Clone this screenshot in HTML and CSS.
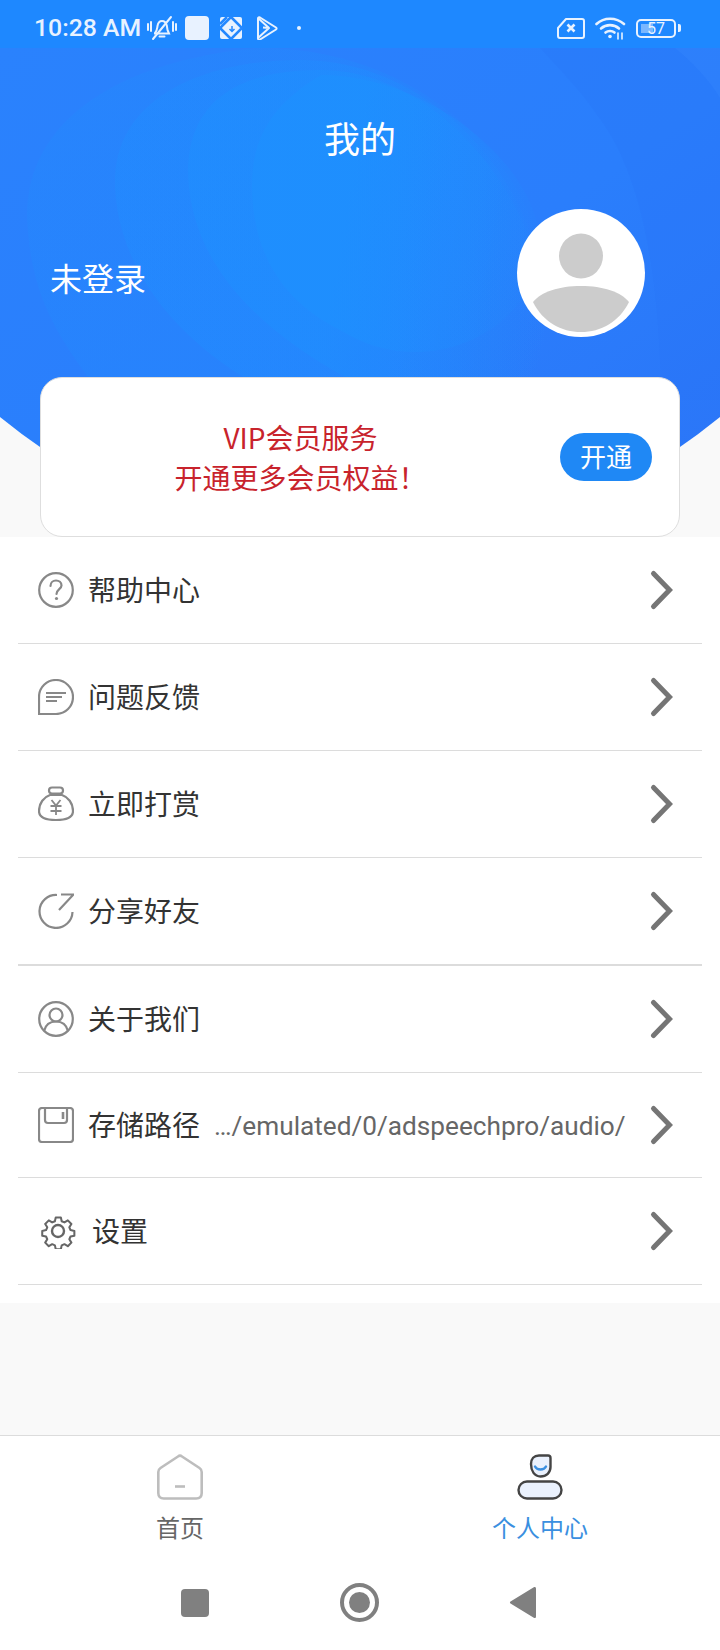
FILE: index.html
```html
<!DOCTYPE html>
<html lang="zh">
<head>
<meta charset="utf-8">
<title>我的</title>
<link rel="stylesheet" href="styles.css">
</head>
<body>
<div class="screen">
  <div class="status">
    <div class="status-left">
      <span class="time">10:28 AM</span>
      <svg class="st-bell" width="30" height="26" viewBox="0 0 30 26" fill="none" stroke="#e8f2ff" stroke-width="2" stroke-linecap="round"><path d="M8 18c2-2 2-4 2.500-7 .5-3 2.500-5 4.500-5s4 1.500 4.800 4.500l.7 4.500 1.500 3.500H8z"/><path d="M12.500 21.500h5"/><path d="M6 24 24 2"/><path d="M1 9v6M4 7v9M26 7v9M29 9v6"/></svg>
      <span class="st-square"></span>
      <svg class="st-icon" width="24" height="24" viewBox="0 0 24 24"><rect x="1" y="1" width="22" height="22" rx="2" fill="#e8f2ff"/><path d="M1 8 8 1M1 12l11 11M12 1l11 11-11 11" fill="none" stroke="#2488ff" stroke-width="2.500"/><path d="M1 12 12 1" fill="none" stroke="#2488ff" stroke-width="2.500"/><path d="M13 10v5M10.500 13l2.500 2.500 2.500-2.500" fill="none" stroke="#2488ff" stroke-width="1.500"/></svg>
      <svg class="st-play" width="22" height="24" viewBox="0 0 22 24" fill="none" stroke="#e8f2ff" stroke-width="2" stroke-linejoin="round"><path d="M2 2.500c0-1 1-1.500 2-1l16 10c.8.500.8 1.500 0 2l-16 10c-1 .5-2 0-2-1z"/><path d="M2 2 13 12 2 22M13 12l-6-.5"/></svg>
      <span class="st-dot"></span>
    </div>
    <div class="status-right">
      <svg width="28" height="22" viewBox="0 0 28 22" fill="none" stroke="#e8f2ff" stroke-width="2"><path d="M9 2h16c1 0 2 1 2 2v15c0 1-1 2-2 2H3c-1 0-2-1-2-2v-8z" stroke-linejoin="round"/><path d="M10.500 7.500l7 7M17.500 7.500l-7 7" stroke-width="2.600"/></svg>
      <svg width="31" height="24" viewBox="0 0 31 24" fill="none" stroke="#e8f2ff" stroke-width="2.600" stroke-linecap="round"><path d="M1.500 8C9 1 21 1 29 8"/><path d="M6 12.500c5-4.500 13-4.500 18 0"/><path d="M10.500 16.500c2.500-2 6.500-2 9 0"/><circle cx="15" cy="20.500" r="1.800" fill="#e8f2ff" stroke="none"/><path d="M23 17v6M27 17v6" stroke-width="1.600"/></svg>
      <span class="battery"><span class="battery-fill"></span><span class="battery-num">57</span></span>
      <span class="battery-nub"></span>
    </div>
  </div>

  <div class="hero">
    <svg class="hero-art" width="720" height="489" viewBox="0 48 720 489">
      <defs>
        <linearGradient id="heroBase" x1="0" y1="0" x2="1" y2="1">
          <stop offset="0" stop-color="#2a82fd"/>
          <stop offset=".55" stop-color="#2a7efc"/>
          <stop offset="1" stop-color="#2b74f7"/>
        </linearGradient>
        <linearGradient id="swirl" gradientUnits="userSpaceOnUse" x1="120" y1="200" x2="560" y2="280">
          <stop offset="0" stop-color="#1c92ff" stop-opacity=".5"/>
          <stop offset=".5" stop-color="#1c92ff" stop-opacity=".5"/>
          <stop offset="1" stop-color="#1c92ff" stop-opacity="0"/>
        </linearGradient>
      </defs>
      <rect x="0" y="48" width="720" height="489" fill="url(#heroBase)"/>
      <path d="M27 215C30 300 60 340 105 400L500 400C620 300 500 48 260 48C120 60 27 120 27 215z" fill="url(#swirl)" opacity=".4"/>
      <path d="M115 181C115 260 170 345 285 400L520 400C600 280 480 60 300 60C200 60 115 100 115 181z" fill="url(#swirl)" opacity=".6"/>
      <path d="M188 168C188 250 240 330 390 400L520 400C600 300 480 70 320 70C240 70 190 100 188 168z" fill="url(#swirl)" opacity=".8"/>
      <path d="M252 185C252 250 280 300 340 330C420 380 520 340 540 260C550 170 430 75 321 75C280 100 252 130 252 185z" fill="url(#swirl)"/>
      <path d="M597 115C640 170 660 270 661 400H720V48H540C560 70 580 90 597 115z" fill="#2b70f5" opacity=".22"/>
      <path d="M675 48C690 60 710 80 720 98V48z" fill="#3a8aff" opacity=".25"/>
    </svg>
    <h1 class="title">我的</h1>
    <div class="profile">
      <span class="login">未登录</span>
      <div class="avatar">
        <svg width="128" height="128" viewBox="0 0 128 128"><ellipse cx="64" cy="47" rx="22" ry="22.500" fill="#ccc"/><path d="M16 93C24 83 42 77 64 77s40 6 48 16C102 113 84 123 64 123S26 113 16 93z" fill="#ccc"/></svg>
      </div>
    </div>
  </div>

  <div class="vip">
    <p class="vip-text">VIP会员服务<br>开通更多会员权益！</p>
    <span class="vip-btn">开通</span>
  </div>

  <div class="list">
    <div class="row">
      <svg class="ico" width="36" height="36" viewBox="0 0 36 36" fill="none" stroke="#888" stroke-width="2.200"><circle cx="18" cy="18" r="16.800"/><path d="M12.500 14c0-3.500 2.500-5.500 5.500-5.500s5.500 2 5.500 5c0 3.500-5 4-5 8.500" stroke-linecap="round"/><circle cx="18.500" cy="26.500" r="1.600" fill="#888" stroke="none"/></svg>
      <span class="label">帮助中心</span>
      <svg class="chev" width="24" height="42" viewBox="0 0 24 42" fill="none" stroke="#757575" stroke-width="5" stroke-linecap="round"><path d="M4.500 4.500 20.500 21 4.500 37.500"/></svg>
    </div>
    <div class="row">
      <svg class="ico" width="36" height="36" viewBox="0 0 36 36" fill="none" stroke="#888" stroke-width="2.200"><path d="M1 35V18C1 8 9 1 18 1s17 7.500 17 17-7.500 17-17 17z"/><path d="M8 14h20M8 18h16M8 22h11"/></svg>
      <span class="label">问题反馈</span>
      <svg class="chev" width="24" height="42" viewBox="0 0 24 42" fill="none" stroke="#757575" stroke-width="5" stroke-linecap="round"><path d="M4.500 4.500 20.500 21 4.500 37.500"/></svg>
    </div>
    <div class="row">
      <svg class="ico" width="36" height="36" viewBox="0 0 36 36" fill="none" stroke="#888" stroke-width="2.200"><path d="M12 9C6 11 1 17 1 25c0 6 5 9 17 9s17-3 17-9c0-8-5-14-11-16z"/><rect x="11" y="1.500" width="14" height="6" rx="3"/><path d="M13.500 14l4.500 5.500 4.500-5.500M18 19.500V29M12.500 20h11M12.500 25h11" stroke-width="1.800"/></svg>
      <span class="label">立即打赏</span>
      <svg class="chev" width="24" height="42" viewBox="0 0 24 42" fill="none" stroke="#757575" stroke-width="5" stroke-linecap="round"><path d="M4.500 4.500 20.500 21 4.500 37.500"/></svg>
    </div>
    <div class="row row-wide">
      <svg class="ico" width="36" height="36" viewBox="0 0 36 36" fill="none" stroke="#888" stroke-width="2.200"><path d="M19 2A16.500 16.500 0 1 0 34.500 19"/><path d="M23 1.500h12.500L21 17" stroke-linejoin="round"/></svg>
      <span class="label">分享好友</span>
      <svg class="chev" width="24" height="42" viewBox="0 0 24 42" fill="none" stroke="#757575" stroke-width="5" stroke-linecap="round"><path d="M4.500 4.500 20.500 21 4.500 37.500"/></svg>
    </div>
    <div class="row">
      <svg class="ico" width="36" height="36" viewBox="0 0 36 36" fill="none" stroke="#888" stroke-width="2.200"><circle cx="18" cy="18" r="16.800"/><circle cx="18" cy="14" r="6.500"/><path d="M6 30c1.500-6 6-9.500 12-9.500S28.500 24 30 30"/></svg>
      <span class="label">关于我们</span>
      <svg class="chev" width="24" height="42" viewBox="0 0 24 42" fill="none" stroke="#757575" stroke-width="5" stroke-linecap="round"><path d="M4.500 4.500 20.500 21 4.500 37.500"/></svg>
    </div>
    <div class="row row-short">
      <svg class="ico" width="36" height="36" viewBox="0 0 36 36" fill="none" stroke="#888" stroke-width="2.200"><rect x="1" y="1" width="34" height="34" rx="3"/><path d="M7 1v12c0 2 1 3 3 3h16c2 0 3-1 3-3V1"/><path d="M25 5v7" stroke-width="2.600"/></svg>
      <span class="label">存储路径</span>
      <span class="path">…/emulated/0/adspeechpro/audio/</span>
      <svg class="chev" width="24" height="42" viewBox="0 0 24 42" fill="none" stroke="#757575" stroke-width="5" stroke-linecap="round"><path d="M4.500 4.500 20.500 21 4.500 37.500"/></svg>
    </div>
    <div class="row">
      <svg class="ico ico-gear" width="36" height="36" viewBox="0 0 36 36" fill="none" stroke="#666" stroke-width="2.400" stroke-linejoin="round"><path d="M15 2h6l1 4.500 3.200 1.400 4-2.400 4.200 4.200-2.400 4 1.400 3.200 4.500 1v5.600l-4.500 1-1.400 3.200 2.400 4-4.200 4.200-4-2.400-3.200 1.400-1 4.500h-6l-1-4.500-3.200-1.400-4 2.400-4.200-4.200 2.400-4-1.400-3.200-4.500-1v-5.600l4.500-1 1.400-3.200-2.400-4 4.200-4.200 4 2.400L14 6.500z" transform="translate(3 2.700) scale(.85)"/><circle cx="18" cy="18" r="6"/></svg>
      <span class="label label-settings">设置</span>
      <svg class="chev" width="24" height="42" viewBox="0 0 24 42" fill="none" stroke="#757575" stroke-width="5" stroke-linecap="round"><path d="M4.500 4.500 20.500 21 4.500 37.500"/></svg>
    </div>
  </div>

  <div class="spacer"></div>

  <div class="tabs">
    <div class="tab">
      <svg width="46" height="46" viewBox="0 0 46 46" fill="none" stroke="#bdbdbd" stroke-width="2.600" stroke-linejoin="round"><path d="M21 2.500c1.200-1 2.800-1 4 0L42.500 14c1.500 1 2.200 2.200 2.200 4v21c0 3.500-2 5.500-5.500 5.500H6.800c-3.500 0-5.500-2-5.500-5.500V18c0-1.800.7-3 2.200-4z"/><path d="M18 32.500h10"/></svg>
      <span class="tab-label">首页</span>
    </div>
    <div class="tab tab-on">
      <svg width="46" height="46" viewBox="0 0 46 46" fill="none"><path d="M14 10c0-5 3-8.500 8-8.500h9c1.500 0 2.500 1 2.500 2.500v9c0 5.500-4 9.500-10 9.500S14 17 14 10z" fill="#eaf1fd" stroke="#444" stroke-width="2.400"/><path d="M18 12.500c2 4 9 4 11 0" stroke="#3a8fe0" stroke-width="2.400" stroke-linecap="round"/><rect x="1.500" y="27.500" width="43" height="17" rx="8.500" fill="#eaf1fd" stroke="#444" stroke-width="2.400"/></svg>
      <span class="tab-label">个人中心</span>
    </div>
  </div>

  <div class="nav">
    <span class="nav-square"></span>
    <span class="nav-circle"><span class="nav-dot"></span></span>
    <svg width="28" height="33" viewBox="0 0 28 33"><path d="M27 2.500v28c0 1.500-1.200 2-2.200 1.300L1.500 17.500c-.8-.5-.8-1.500 0-2L24.800 1.200C25.800.5 27 1 27 2.500z" fill="#808080"/></svg>
  </div>
</div>
</body>
</html>
```
FILE: styles.css
```css
* { box-sizing: border-box; }
html, body { margin: 0; padding: 0; }
body {
  font-family: "Noto Sans CJK SC", "Noto Sans", sans-serif;
  background: #f9f9f9;
  color: #333;
}
.screen {
  width: 720px;
  height: 1650px;
  display: flex;
  flex-direction: column;
  overflow: hidden;
}

/* status bar */
.status {
  height: 48px;
  flex: none;
  background: #1e88ff;
  padding: 8px 39px 0 34px;
  display: flex;
  align-items: center;
  justify-content: space-between;
  color: #e8f2ff;
}
.status-left, .status-right { display: flex; align-items: center; }
.time {
  font-family: Roboto, sans-serif;
  font-size: 24.800px;
  font-weight: 500;
  line-height: 30px;
  margin-right: 6px;
}
.st-bell { margin-right: 8px; }
.st-square { width: 24px; height: 24px; border-radius: 4px; background: #e8f2ff; margin-right: 10px; }
.st-icon { margin-right: 13px; }
.st-play { margin-right: 19px; }
.st-dot { width: 4px; height: 4px; border-radius: 50%; background: #e8f2ff; }
.status-right { gap: 10px; }
.battery {
  width: 40px;
  height: 19px;
  border: 2px solid #e8f2ff;
  border-radius: 5px;
  position: relative;
  display: flex;
  align-items: center;
  justify-content: center;
  overflow: hidden;
}
.battery-fill { position: absolute; left: 3px; top: 3px; bottom: 3px; width: 12px; background: #e8f2ff; opacity: .45; }
.battery-num { position: relative; font-family: Roboto, sans-serif; font-size: 16px; line-height: 15px; color: #e8f2ff; }
.battery-nub { width: 3px; height: 8px; background: #e8f2ff; border-radius: 0 2px 2px 0; margin-left: -8px; }

/* hero */
.hero {
  height: 489px;
  flex: none;
  position: relative;
  clip-path: circle(567px at 360px -69px);
  color: #fff;
}
.hero-art { position: absolute; left: 0; top: 0; display: block; }
.title {
  position: relative;
  margin: 0;
  padding-top: 63px;
  font-size: 36px;
  line-height: 52px;
  font-weight: 400;
  text-align: center;
}
.profile {
  position: relative;
  display: flex;
  align-items: center;
  justify-content: space-between;
  padding: 46px 75px 0 50px;
}
.login { font-size: 32px; line-height: 46px; margin-top: 7px; }
.avatar {
  width: 128px;
  height: 128px;
  border-radius: 50%;
  background: #fff;
}
.avatar svg { display: block; }

/* vip card */
.vip {
  position: relative;
  flex: none;
  width: 640px;
  height: 160px;
  margin: -160px 0 0 40px;
  background: #fff;
  border: 1px solid #dedede;
  border-radius: 22px;
  display: flex;
  align-items: center;
  padding: 0 27px 0 0;
}
.vip-text {
  flex: 1;
  margin: 0;
  font-size: 28px;
  line-height: 40px;
  color: #c8232c;
  text-align: center;
}
.vip-btn {
  width: 92px;
  height: 48px;
  border-radius: 24px;
  background: #1f88f5;
  color: #fff;
  font-size: 26px;
  line-height: 46px;
  text-align: center;
}

/* list */
.list {
  flex: none;
  background: #fff;
  padding: 0 18px 18px;
}
.row {
  height: 107px;
  border-bottom: 1px solid #dcdcdc;
  display: flex;
  align-items: center;
  padding: 0 29px 0 20px;
}
.row-wide { height: 108px; border-bottom-width: 2px; }
.row-short { height: 105px; }
.ico { flex: none; display: block; }
.ico-gear { margin-left: 2px; }
.label {
  margin: -3px 0 0 14px;
  font-size: 28px;
  line-height: 40px;
  color: #333;
}
.label-settings { margin-left: 16px; }
.path {
  margin: 1px 0 0 14px;
  font-family: Roboto, sans-serif;
  font-size: 26.200px;
  color: #666;
  white-space: nowrap;
}
.chev { flex: none; margin-left: auto; }
.spacer { flex: 1; }

/* tabs */
.tabs {
  flex: none;
  height: 130px;
  background: #fff;
  border-top: 1px solid #dcdcdc;
  display: flex;
  padding-top: 18px;
}
.tab {
  flex: 1;
  display: flex;
  flex-direction: column;
  align-items: center;
}
.tab svg { display: block; }
.tab-label {
  margin-top: 9px;
  font-size: 24px;
  line-height: 36px;
  color: #666;
}
.tab-on .tab-label { color: #3a8fe0; }

/* nav */
.nav {
  flex: none;
  height: 85px;
  background: #fff;
  display: flex;
  align-items: center;
  padding: 0 183px 10px 181px;
  justify-content: space-between;
}
.nav-square { width: 28px; height: 28px; border-radius: 4px; background: #808080; }
.nav-circle {
  width: 39px;
  height: 39px;
  border-radius: 50%;
  border: 4px solid #808080;
  display: flex;
  align-items: center;
  justify-content: center;
}
.nav-dot { width: 21px; height: 21px; border-radius: 50%; background: #808080; }
```
